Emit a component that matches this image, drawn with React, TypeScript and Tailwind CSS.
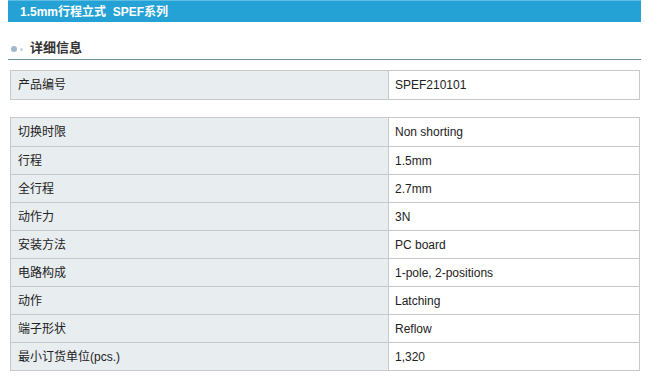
const rows: [string, string][] = [
  ["切换时限", "Non shorting"],
  ["行程", "1.5mm"],
  ["全行程", "2.7mm"],
  ["动作力", "3N"],
  ["安装方法", "PC board"],
  ["电路构成", "1-pole, 2-positions"],
  ["动作", "Latching"],
  ["端子形状", "Reflow"],
  ["最小订货单位(pcs.)", "1,320"],
];

const font = { fontFamily: '"Liberation Sans", "Noto Sans CJK SC", sans-serif' };

function Row({ label, value, first }: { label: string; value: string; first?: boolean }) {
  return (
    <div className={`flex h-[28px] ${first ? "" : "border-t border-[#c8c8c8]"}`}>
      <div className="w-[378px] bg-[#e8edf0] border-r border-[#c8c8c8] pl-[7px] flex items-center text-[12px] text-[#222]">
        {label}
      </div>
      <div className="flex-1 bg-white pl-[6px] flex items-center text-[12px] text-[#222]">{value}</div>
    </div>
  );
}

export default function App() {
  return (
    <div className="w-[650px] h-[377px] bg-white overflow-hidden" style={font}>
      <div className="ml-[8px] w-[633px] h-[22px] bg-[#24a2d6] border-t border-[#5fbce3] flex items-center pl-[12px]">
        <span className="text-white font-bold text-[12px] whitespace-pre">1.5mm行程立式  SPEF系列</span>
      </div>
      <div className="ml-[8px] w-[633px] mt-[17px] h-[21px] border-b border-[#6b8f99] flex items-center">
        <span className="ml-[3px] w-[6px] h-[6px] rounded-full bg-[#9fb8cc]" />
        <span className="ml-[3px] w-[3px] h-[3px] rounded-full bg-[#c3d2de]" />
        <span className="ml-[7px] font-bold text-[13px] text-[#333] pb-[2px]">详细信息</span>
      </div>
      <div className="ml-[10px] w-[630px] mt-[10px] border border-[#c8c8c8]">
        <Row label="产品编号" value="SPEF210101" first />
      </div>
      <div className="ml-[10px] w-[630px] mt-[17px] border border-[#c8c8c8]">
        {rows.map(([l, v], i) => (
          <Row key={l} label={l} value={v} first={i === 0} />
        ))}
      </div>
    </div>
  );
}
